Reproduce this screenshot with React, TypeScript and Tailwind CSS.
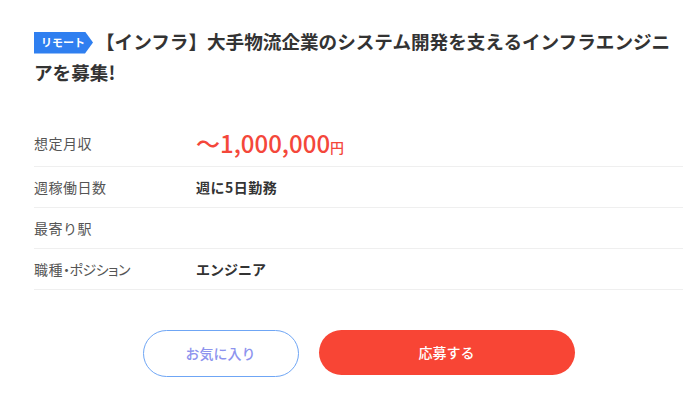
import React from "react";

const font = { fontFamily: '"Noto Sans CJK JP", "Noto Sans", sans-serif' };

export default function App() {
  const rows: { label: React.ReactNode; key: string; value: React.ReactNode; shift?: boolean }[] = [
    {
      key: "a",
      label: "想定月収",
      shift: true,
      value: (
        <span className="relative top-[-3px] text-[#f4473a] font-medium leading-none">
          <span className="text-[24px]">〜1,000,000</span>
          <span className="text-[14px]">円</span>
        </span>
      ),
    },
    { key: "b", label: "週稼働日数", value: <span className="font-bold text-[14px] text-[#333] tracking-[0.5px]">週に5日勤務</span> },
    { key: "c", label: "最寄り駅", value: null },
    {
      key: "d",
      label: (
        <span>
          職種<span className="[font-feature-settings:'palt'] tracking-[-0.5px]">・ポジション</span>
        </span>
      ),
      value: <span className="font-bold text-[14px] text-[#333]">エンジニア</span>,
    },
  ];
  return (
    <div className="w-[700px] h-[402px] bg-white overflow-hidden" style={font}>
      <div className="pl-[34px] pr-[17px] pt-[25px]">
        <h1 className="text-[18.6px] leading-[31px] font-bold text-[#333]">
          <span className="inline-flex items-center align-[2px] h-[22px] w-[59px] pl-[7px] mr-[3px] bg-[#2f7ff0] text-white text-[11px] font-bold leading-none [clip-path:polygon(0_0,calc(100%-8px)_0,100%_50%,calc(100%-8px)_100%,0_100%)]">
            リモート
          </span>
          【インフラ】大手物流企業のシステム開発を支えるインフラエンジニアを募集!
        </h1>
        <div className="mt-[39px]">
          {rows.map((r) => (
            <div key={r.key} className="flex items-center h-[41px] border-b border-[#efefef]">
              <div className={r.shift ? "relative top-[-3px] w-[162px] text-[14px] text-[#555] tracking-[0.5px]" : "w-[162px] text-[14px] text-[#555] tracking-[0.5px]"}>
                {r.label}
              </div>
              <div className="flex items-center">{r.value}</div>
            </div>
          ))}
        </div>
        <div className="flex justify-center gap-[20px] mt-[40px]">
          <button className="w-[156px] h-[47px] rounded-full border border-[#6fa6f5] bg-white text-[14px] font-medium text-[#8d93ee]">
            お気に入り
          </button>
          <button className="w-[256px] h-[45px] rounded-full bg-[#f84535] text-[14px] font-medium text-white">
            応募する
          </button>
        </div>
      </div>
    </div>
  );
}
